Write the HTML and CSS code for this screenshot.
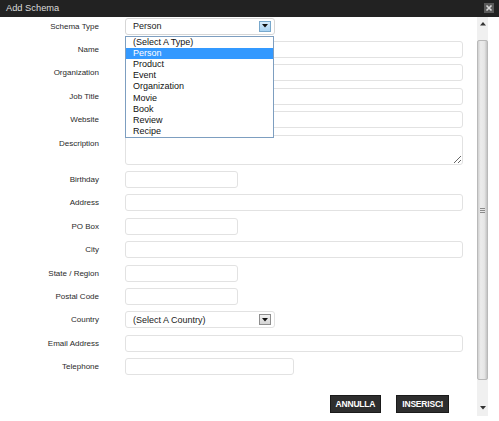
FILE: index.html
```html
<!DOCTYPE html>
<html>
<head>
<meta charset="utf-8">
<title>Add Schema</title>
<link rel="stylesheet" href="styles.css">
</head>
<body>
<div class="dialog">
  <div class="titlebar">
    <span class="title">Add Schema</span>
    <span class="close"><svg width="10" height="10" viewBox="0 0 10 10"><path d="M2.5 2.5 L7.5 7.5 M7.5 2.5 L2.5 7.5" stroke="#d8d8d8" stroke-width="1.6"/></svg></span>
  </div>
  <div class="main">
    <form class="form">
      <label class="lbl">Schema Type</label>
      <div class="select-wrap">
        <div class="select focus"><span>Person</span><span class="arrow blue"><svg width="6" height="4" viewBox="0 0 6 4"><path d="M0 0 H6 L3 3.5 Z" fill="#111"/></svg></span></div>
        <ul class="dropdown">
          <li>(Select A Type)</li>
          <li class="sel">Person</li>
          <li>Product</li>
          <li>Event</li>
          <li>Organization</li>
          <li>Movie</li>
          <li>Book</li>
          <li>Review</li>
          <li>Recipe</li>
        </ul>
      </div>

      <label class="lbl">Name</label>
      <input class="inp" type="text">

      <label class="lbl">Organization</label>
      <input class="inp" type="text">

      <label class="lbl">Job Title</label>
      <input class="inp" type="text">

      <label class="lbl">Website</label>
      <input class="inp" type="text">

      <label class="lbl top">Description</label>
      <textarea class="inp area"></textarea>

      <label class="lbl">Birthday</label>
      <input class="inp short" type="text">

      <label class="lbl">Address</label>
      <input class="inp" type="text">

      <label class="lbl">PO Box</label>
      <input class="inp short" type="text">

      <label class="lbl">City</label>
      <input class="inp" type="text">

      <label class="lbl">State / Region</label>
      <input class="inp short" type="text">

      <label class="lbl">Postal Code</label>
      <input class="inp short" type="text">

      <label class="lbl">Country</label>
      <div class="select-wrap">
        <div class="select"><span>(Select A Country)</span><span class="arrow gray"><svg width="6" height="4" viewBox="0 0 6 4"><path d="M0 0 H6 L3 3.5 Z" fill="#111"/></svg></span></div>
      </div>

      <label class="lbl">Email Address</label>
      <input class="inp" type="text">

      <label class="lbl">Telephone</label>
      <input class="inp medium" type="text">

      <div class="actions">
        <button type="button" class="btn">ANNULLA</button>
        <button type="button" class="btn">INSERISCI</button>
      </div>
    </form>
    <div class="scrollbar">
      <div class="sb-up"><svg width="6" height="4" viewBox="0 0 6 4"><path d="M0 3.5 H6 L3 0 Z" fill="#333"/></svg></div>
      <div class="sb-thumb"><span class="grip"></span></div>
      <div class="sb-track"></div>
      <div class="sb-down"><svg width="6" height="4" viewBox="0 0 6 4"><path d="M0 0 H6 L3 3.5 Z" fill="#333"/></svg></div>
    </div>
  </div>
</div>
</body>
</html>
```

FILE: styles.css
```css
html, body {
  margin: 0;
  padding: 0;
  background: #ffffff;
}

body {
  font-family: "Liberation Sans", Arial, sans-serif;
  width: 499px;
  height: 421px;
  overflow: hidden;
}

.dialog {
  width: 499px;
  height: 421px;
  display: flex;
  flex-direction: column;
}

.titlebar {
  height: 17px;
  flex: none;
  background: #222222;
  display: flex;
  align-items: center;
  justify-content: space-between;
  padding: 0 5px 0 6px;
  box-sizing: border-box;
}

.title {
  color: #dcdcdc;
  font-size: 9.3px;
  line-height: 17px;
}

.close {
  width: 10px;
  height: 10px;
  background: #5a5a5a;
  display: flex;
  margin-top: -1px;
}

.main {
  flex: 1;
  display: flex;
  min-height: 0;
}

.form {
  margin: 0;
  width: 477px;
  flex: none;
  box-sizing: border-box;
  padding: 0.6px 14px 0 0;
  display: grid;
  grid-template-columns: 99px 1fr;
  column-gap: 26px;
  row-gap: 6.4px;
  align-items: center;
  align-content: start;
}

.lbl {
  font-size: 8px;
  color: #2a2a2a;
  text-align: right;
  line-height: 17px;
}

.lbl.top {
  align-self: start;
}

.inp {
  display: block;
  box-sizing: border-box;
  height: 17px;
  width: 100%;
  margin: 0;
  padding: 0 5px;
  border: 1px solid #e2e2e2;
  border-radius: 3px;
  background: #ffffff;
  font-family: "Liberation Sans", Arial, sans-serif;
  font-size: 9px;
  outline: none;
}

.inp.short {
  width: 113px;
}

.inp.medium {
  width: 169px;
}

.inp.area {
  height: 30px;
  resize: vertical;
}

.select-wrap {
  position: relative;
  width: 150px;
  height: 17px;
}

.select {
  box-sizing: border-box;
  height: 17px;
  width: 150px;
  border: 1px solid #e2e2e2;
  border-radius: 3px;
  background: #ffffff;
  display: flex;
  align-items: center;
  justify-content: space-between;
  padding: 0 3px 0 7px;
  font-size: 9px;
  color: #222222;
}

.select.focus {
  border-color: #d6d6d6;
}

.arrow {
  box-sizing: border-box;
  width: 12px;
  height: 11px;
  display: flex;
  align-items: center;
  justify-content: center;
  border: 1px solid #9a9a9a;
}

.arrow.blue {
  background: linear-gradient(#d6ebfb, #a9d3f3);
  border-color: #78a8cc;
}

.arrow.gray {
  background: linear-gradient(#f2f2f2, #d4d4d4);
  border-color: #8e8e8e;
}

.dropdown {
  position: absolute;
  top: 18px;
  left: 0;
  width: 149px;
  box-sizing: border-box;
  margin: 0;
  padding: 0;
  list-style: none;
  background: #ffffff;
  border: 1px solid #7d9ec0;
  z-index: 5;
}

.dropdown li {
  font-size: 9px;
  line-height: 11.2px;
  height: 11.2px;
  padding-left: 7px;
  color: #111111;
}

.dropdown li.sel {
  background: #3399ff;
  color: #ffffff;
}

.actions {
  grid-column: 1 / -1;
  display: flex;
  justify-content: flex-end;
  gap: 15px;
  margin: 14px 14px 0 0;
}

.btn {
  height: 18px;
  padding: 0 5px;
  margin: 0;
  border: 1px solid #1a1a1a;
  background: #2e2e2e;
  color: #ffffff;
  font-family: "Liberation Sans", Arial, sans-serif;
  font-weight: bold;
  font-size: 8.5px;
  letter-spacing: -0.2px;
}

.scrollbar {
  width: 11px;
  flex: none;
  margin: 0 11px 5px 0;
  background: #f0f0f0;
  display: flex;
  flex-direction: column;
}

.sb-up {
  height: 23px;
  flex: none;
  display: flex;
  justify-content: center;
  padding-top: 5px;
  box-sizing: border-box;
}

.sb-thumb {
  height: 340px;
  flex: none;
  box-sizing: border-box;
  border: 1px solid #b9b9b9;
  border-radius: 2px;
  background: linear-gradient(to right, #d0d0d0, #ececec 30%, #e6e6e6 70%, #c4c4c4);
  position: relative;
}

.grip {
  position: absolute;
  left: 2px;
  right: 2px;
  top: 167px;
  height: 5px;
  background: repeating-linear-gradient(#8a8a8a 0 1px, transparent 1px 2px);
}

.sb-track {
  flex: 1;
}

.sb-down {
  height: 16px;
  flex: none;
  display: flex;
  justify-content: center;
  align-items: flex-start;
  padding-top: 6px;
  box-sizing: border-box;
}
```
